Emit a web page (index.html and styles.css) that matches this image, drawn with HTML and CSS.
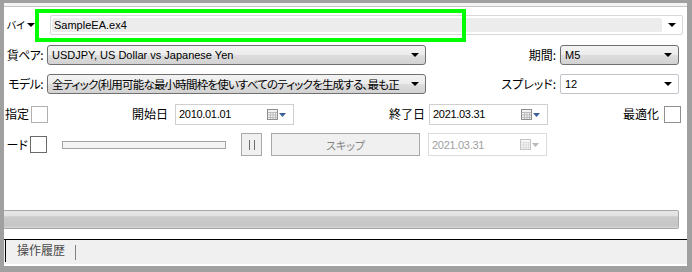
FILE: index.html
```html
<!DOCTYPE html>
<html lang="ja">
<head>
    <meta charset="UTF-8">
    <title>テスター</title>
    <link rel="stylesheet" href="styles.css">
</head>
<body>
    <div class="window">
        <div class="panel">
            <div class="top-edge"></div>

            <div class="row row-ea">
                <div class="lbl lbl-ea"><span>バイ</span></div>
                <i class="tri tri-ea"></i>
                <div class="ea-combo">
                    <div class="ea-field">SampleEA.ex4</div>
                    <i class="tri"></i>
                </div>
                <div class="highlight"></div>
            </div>

            <div class="row row-combo">
                <div class="lbl w-a"><span>貨ペア:</span></div>
                <div class="combo w-wide"><span class="val">USDJPY, US Dollar vs Japanese Yen</span><i class="tri"></i></div>
                <div class="lbl w-b"><span>期間:</span></div>
                <div class="combo w-small"><span class="val">M5</span><i class="tri"></i></div>
            </div>

            <div class="row row-combo row-model">
                <div class="lbl w-a"><span>モデル:</span></div>
                <div class="combo w-wide"><span class="val jp">全ティック(利用可能な最小時間枠を使いすべてのティックを生成する、最も正</span><i class="tri"></i></div>
                <div class="lbl w-b"><span>スプレッド:</span></div>
                <div class="combo edit w-small"><span class="val">12</span><i class="tri"></i></div>
            </div>

            <div class="row row-dates">
                <div class="lbl w-c"><span>指定</span></div>
                <div class="check light"></div>
                <div class="lbl w-d"><span>開始日</span></div>
                <div class="date">
                    <span class="val">2010.01.01</span>
                    <svg class="cal" width="20" height="11" viewBox="0 0 20 11">
                        <rect x="0.5" y="0.5" width="10" height="10" fill="#f2f2f2" stroke="#8e8e8e"/>
                        <path d="M1 3.5h9M1 6h9M1 8.5h9M3.5 3v7M6 3v7M8.5 3v7" stroke="#bcbcbc"/>
                        <path d="M12 4h7l-3.5 4z" fill="#3b5f98"/>
                    </svg>
                </div>
                <div class="lbl w-e"><span>終了日</span></div>
                <div class="date">
                    <span class="val">2021.03.31</span>
                    <svg class="cal" width="20" height="11" viewBox="0 0 20 11">
                        <rect x="0.5" y="0.5" width="10" height="10" fill="#f2f2f2" stroke="#8e8e8e"/>
                        <path d="M1 3.5h9M1 6h9M1 8.5h9M3.5 3v7M6 3v7M8.5 3v7" stroke="#bcbcbc"/>
                        <path d="M12 4h7l-3.5 4z" fill="#3b5f98"/>
                    </svg>
                </div>
                <div class="lbl w-f"><span>最適化</span></div>
                <div class="check mid"></div>
            </div>

            <div class="row row-visual">
                <div class="lbl w-g"><span>ード</span></div>
                <div class="check dark"></div>
                <div class="slider"></div>
                <div class="pause"><i></i><i></i></div>
                <div class="skip">スキップ</div>
                <div class="date disabled">
                    <span class="val">2021.03.31</span>
                    <svg class="cal" width="20" height="11" viewBox="0 0 20 11">
                        <rect x="0.5" y="0.5" width="10" height="10" fill="#f7f7f7" stroke="#c4c4c4"/>
                        <path d="M1 3.5h9M1 6h9M1 8.5h9M3.5 3v7M6 3v7M8.5 3v7" stroke="#dcdcdc"/>
                        <path d="M12 4h7l-3.5 4z" fill="#b8b8b8"/>
                    </svg>
                </div>
            </div>

            <div class="progress"></div>

            <div class="tabbar">
                <div class="tab">操作履歴</div>
                <div class="tab-sep"></div>
            </div>
        </div>
    </div>
</body>
</html>
```

FILE: styles.css
```css
* {
    box-sizing: border-box;
}

body {
    margin: 0;
    font-family: "Liberation Sans", "Noto Sans CJK JP", sans-serif;
    font-size: 11px;
    color: #000;
}

.window {
    width: 692px;
    height: 272px;
    background: #a0a0a0;
    padding: 3px 5px 6px 4px;
}

.panel {
    height: 263px;
    background: #fff;
    display: flex;
    flex-direction: column;
}

.top-edge {
    flex: none;
    height: 4px;
    background: #f4f4f4;
    border-bottom: 1px solid #c4c4c4;
}

.row {
    flex: none;
    display: flex;
    align-items: center;
}

/* labels sit right aligned against their field */
.lbl {
    display: flex;
    justify-content: flex-end;
    overflow: hidden;
    white-space: nowrap;
    font-family: "Noto Sans CJK JP", sans-serif;
    font-size: 12px;
    line-height: 16px;
    font-feature-settings: "palt";
}

.lbl span {
    flex: none;
}

.tri {
    display: block;
    flex: none;
    width: 0;
    height: 0;
    border-left: 4px solid transparent;
    border-right: 4px solid transparent;
    border-top: 4px solid #000;
}

/* expert row */
.row-ea {
    position: relative;
    height: 20px;
    margin-top: 8px;
}

.lbl-ea {
    width: 21px;
    font-size: 10px;
}

.tri-ea {
    margin-left: 2px;
    margin-right: 15px;
}

.ea-combo {
    width: 633px;
    height: 20px;
    display: flex;
    align-items: center;
    border: 1px solid #d8d8d8;
    border-radius: 2px;
    padding: 2px 6px 2px 1px;
    background: #fff;
}

.ea-field {
    width: 613px;
    height: 14px;
    line-height: 14px;
    padding-left: 2px;
    background: #ececec;
    border-radius: 2px;
    margin-right: 6px;
}

.highlight {
    position: absolute;
    left: 31px;
    top: -6px;
    width: 431px;
    height: 33px;
    border: 4px solid #00ff00;
}

/* combo rows */
.row-combo {
    height: 20px;
    margin-top: 10px;
}

.row-model {
    margin-top: 9px;
}

.w-a {
    width: 39px;
    margin-right: 4px;
    letter-spacing: -0.6px;
}

.w-b {
    width: 130px;
    margin-right: 4px;
}

.combo {
    height: 20px;
    display: flex;
    align-items: center;
    justify-content: space-between;
    padding: 0 6px 0 4px;
    border: 1px solid #707070;
    border-radius: 3px;
    background: linear-gradient(#f3f3f3, #ececec 48%, #dddddd 52%, #d2d2d2);
    overflow: hidden;
}

.combo .val {
    white-space: nowrap;
    overflow: hidden;
    flex: 1;
}

.combo .tri {
    margin-left: 6px;
}

.combo .jp {
    font-family: "Noto Sans CJK JP", sans-serif;
    font-size: 11.5px;
    letter-spacing: -0.8px;
    font-feature-settings: "palt";
}

.combo.edit {
    background: #fff;
    border-color: #c2c4ca;
    border-radius: 2px;
}

.w-wide {
    width: 379px;
}

.w-small {
    width: 119px;
}

/* date rows */
.row-dates {
    height: 20px;
    margin-top: 10px;
}

.w-c {
    width: 25px;
    margin-right: 2px;
}

.w-d {
    width: 120px;
    margin-right: 7px;
}

.w-e {
    width: 131px;
    margin-right: 4px;
}

.w-f {
    width: 111px;
    margin-right: 5px;
}

.check {
    width: 17px;
    height: 17px;
    background: #fff;
    border: 1px solid #8f8f8f;
}

.check.light {
    border-color: #b0b0b0;
}

.check.dark {
    border-color: #6a6a6a;
}

.date {
    width: 119px;
    height: 21px;
    display: flex;
    align-items: center;
    justify-content: space-between;
    padding: 0 6px 0 3px;
    border: 1px solid #cfcfcf;
    background: #fff;
}

.date .val {
    letter-spacing: -0.3px;
}

.date.disabled {
    height: 23px;
    color: #a0a0a0;
    border-color: #dcdcdc;
}

/* visual mode row */
.row-visual {
    height: 23px;
    margin-top: 9px;
}

.w-g {
    width: 24px;
    margin-right: 2px;
}

.slider {
    width: 164px;
    height: 8px;
    margin-left: 15px;
    border: 1px solid #a4a4a4;
    background: #f4f4f4;
}

.pause {
    width: 21px;
    height: 23px;
    margin-left: 15px;
    display: flex;
    align-items: center;
    justify-content: center;
    gap: 4px;
    border: 1px solid #a8a8a8;
    background: #f0f0f0;
}

.pause i {
    display: block;
    width: 1px;
    height: 10px;
    background: #6c6c6c;
}

.skip {
    width: 149px;
    height: 23px;
    margin-left: 9px;
    margin-right: 8px;
    display: flex;
    align-items: center;
    justify-content: center;
    border: 1px solid #a8a8a8;
    background: #f0f0f0;
    color: #858585;
    font-family: "Noto Sans CJK JP", sans-serif;
    font-size: 11px;
    font-feature-settings: "palt";
}

/* bottom */
.progress {
    flex: none;
    margin-top: auto;
    margin-right: 8px;
    height: 19px;
    border: 1px solid #a8a8a8;
    border-left: none;
    border-radius: 0 2px 2px 0;
    background: linear-gradient(#e6e6e6, #e2e2e2 28%, #cbcbcb 34%, #c6c6c6 88%, #d6d6d6);
}

.tabbar {
    flex: none;
    height: 27px;
    margin-top: 10px;
    border-top: 1px solid #000;
    border-bottom: 2px solid #fff;
    background: #f0f0f0;
    display: flex;
    align-items: flex-start;
}

.tab {
    height: 22px;
    margin-left: 1px;
    padding: 2px 10px 0 11px;
    border-left: 1px solid #000;
    font-family: "Noto Sans CJK JP", sans-serif;
    font-size: 12px;
    line-height: 16px;
    color: #4a4a4a;
}

.tab-sep {
    width: 1px;
    height: 15px;
    margin-top: 5px;
    background: #808080;
}
```
